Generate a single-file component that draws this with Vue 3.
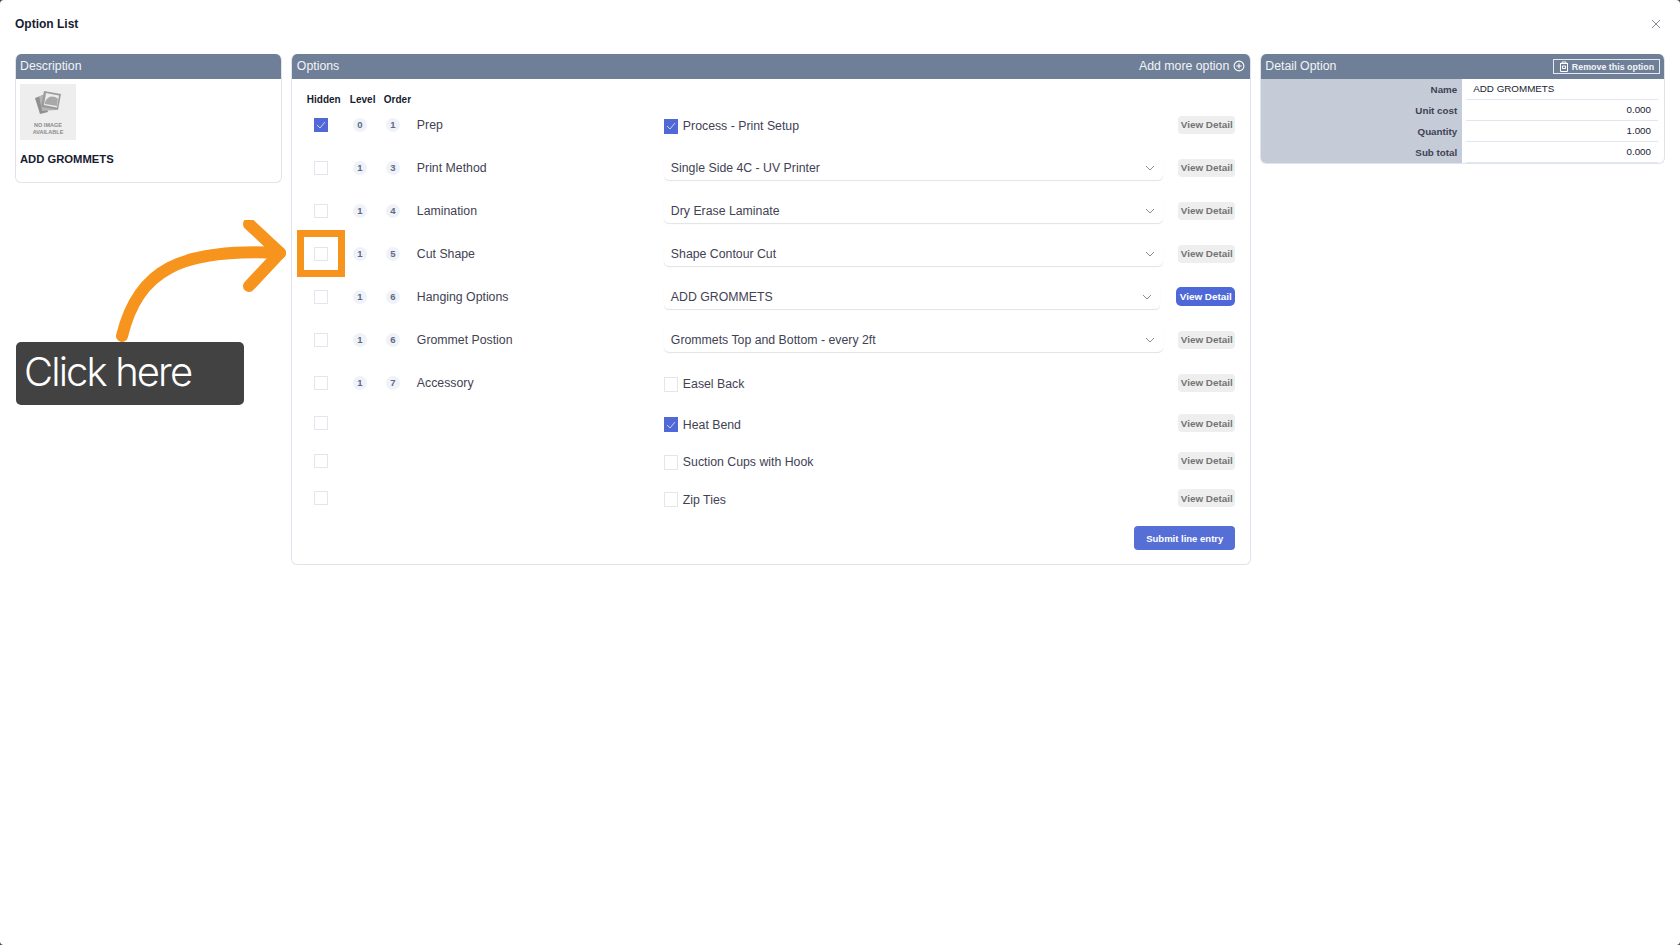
<script setup>
const rows = [
  { hidden: true, level: 0, order: 1, label: 'Prep', type: 'check', value: 'Process - Print Setup', checked: true },
  { level: 1, order: 3, label: 'Print Method', type: 'select', value: 'Single Side 4C - UV Printer' },
  { level: 1, order: 4, label: 'Lamination', type: 'select', value: 'Dry Erase Laminate' },
  { level: 1, order: 5, label: 'Cut Shape', type: 'select', value: 'Shape Contour Cut' },
  { level: 1, order: 6, label: 'Hanging Options', type: 'select', value: 'ADD GROMMETS', active: true },
  { level: 1, order: 6, label: 'Grommet Postion', type: 'select', value: 'Grommets Top and Bottom - every 2ft' },
  { level: 1, order: 7, label: 'Accessory', type: 'check', value: 'Easel Back' },
  { type: 'check', value: 'Heat Bend', checked: true, short: 'a' },
  { type: 'check', value: 'Suction Cups with Hook', short: 'b' },
  { type: 'check', value: 'Zip Ties', short: 'b' }
]
const details = [
  { k: 'Name', v: 'ADD GROMMETS', text: true },
  { k: 'Unit cost', v: '0.000' },
  { k: 'Quantity', v: '1.000' },
  { k: 'Sub total', v: '0.000' }
]
</script>

<template>
  <div class="modal">
    <header class="top">
      <h1>Option List</h1>
      <svg class="close" width="12" height="12" viewBox="0 0 12 12"><path d="M2 2l8 8M10 2l-8 8" stroke="#8a8d99" stroke-width="1" fill="none"/></svg>
    </header>
    <div class="columns">
      <section class="panel desc">
        <div class="head">Description</div>
        <div class="desc-body">
          <div class="noimg">
            <svg width="32" height="28" viewBox="0 0 32 28">
              <path d="M3 10l8-3 5 17-8 2z" fill="#8f8f8f"/>
              <path d="M7 8l16-1 1 15-14 1z" fill="#b5b5b5"/>
              <path d="M12 3l17 3-3 16-17-3z" fill="#9c9c9c"/>
              <path d="M14 5l13 2.500-2 12-13-2.500z" fill="#ececec"/>
              <path d="M13 14c3-6 8-7 13-3l-1 7-12-2z" fill="#a8a8a8"/>
            </svg>
            <span>NO IMAGE<br>AVAILABLE</span>
          </div>
          <p>ADD GROMMETS</p>
        </div>
      </section>

      <section class="panel options">
        <div class="head">
          <span>Options</span>
          <span class="add">Add more option
            <svg width="12" height="12" viewBox="0 0 12 12"><circle cx="6" cy="6" r="4.900" fill="none" stroke="#fff" stroke-width="1.100"/><path d="M6 3.400v5.200M3.400 6h5.200" stroke="#fff" stroke-width="1.100"/></svg>
          </span>
        </div>
        <div class="body">
          <div class="cols">
            <span class="c-hid">Hidden</span><span class="c-lev">Level</span><span class="c-ord">Order</span>
          </div>
          <div v-for="(r, i) in rows" :key="i" class="row" :class="r.short">
            <div class="hid"><i class="box" :class="{ on: r.hidden }"><svg v-if="r.hidden" width="10" height="8" viewBox="0 0 10 8"><path d="M1 4l3 3 5-6" fill="none" stroke="#c9d2f5" stroke-width="1"/></svg></i></div>
            <div class="lev"><b v-if="r.label" class="dot">{{ r.level }}</b></div>
            <div class="ord"><b v-if="r.label" class="dot">{{ r.order }}</b></div>
            <div class="lab">{{ r.label }}</div>
            <div class="val">
              <div v-if="r.type === 'select'" class="sel" :class="{ nar: r.active }">
                <span>{{ r.value }}</span>
                <svg width="10" height="6" viewBox="0 0 10 6"><path d="M1 1l4 4 4-4" fill="none" stroke="#8a8d99" stroke-width="1"/></svg>
              </div>
              <label v-else class="chk">
                <i class="box lg" :class="{ on: r.checked }"><svg v-if="r.checked" width="10" height="8" viewBox="0 0 10 8"><path d="M1 4l3 3 5-6" fill="none" stroke="#c9d2f5" stroke-width="1"/></svg></i>
                {{ r.value }}
              </label>
            </div>
            <button class="vd" :class="{ act: r.active }">View Detail</button>
          </div>
          <div class="foot"><button class="submit">Submit line entry</button></div>
        </div>
      </section>

      <section class="panel detail">
        <div class="head">
          <span>Detail Option</span>
          <span class="rm">
            <svg width="10" height="11" viewBox="0 0 10 11"><path d="M1 2.500h8M3 2.500V1h4v1.500M1.500 2.500v8h7v-8M3.500 5h3v2.500h-3z" fill="none" stroke="#fff" stroke-width="1"/></svg>
            Remove this option
          </span>
        </div>
        <div class="dl">
          <div v-for="d in details" :key="d.k" class="dr">
            <div class="k">{{ d.k }}</div>
            <div class="v" :class="{ t: d.text }"><span>{{ d.v }}</span></div>
          </div>
        </div>
      </section>
    </div>

    <div class="hilite"></div>
    <svg class="arrow" width="190" height="140" viewBox="0 0 190 140">
      <path d="M7 116C23 50 65 28 165 33" fill="none" stroke="#f7941d" stroke-width="12" stroke-linecap="round"/>
      <path d="M134 4L165 33L134 66" fill="none" stroke="#f7941d" stroke-width="12" stroke-linecap="round" stroke-linejoin="round"/>
    </svg>
    <div class="callout">Click here</div>
  </div>
</template>

<style>
html, body { margin: 0; background: #444; }
</style>

<style scoped>
.modal { position: relative; width: 1680px; height: 945px; background: #fff; border-radius: 4px; font-family: "Liberation Sans", Arial, sans-serif; color: #3f4254; overflow: hidden; }
.top { height: 54px; display: flex; align-items: center; justify-content: space-between; padding: 0 18px 7px 15px; box-sizing: border-box; }
h1 { margin: 0; font-size: 12px; font-weight: 700; color: #181c32; }
.columns { display: flex; align-items: flex-start; padding: 0 15px; }
.panel { border: 1px solid #dfe4ec; border-top: 0; border-radius: 6px; box-sizing: border-box; overflow: hidden; background: #fff; }
.head { height: 25px; padding: 0 4px 2px 4px; background: #6f7f97; color: #f2f4f7; font-size: 12.300px; display: flex; align-items: center; justify-content: space-between; box-sizing: border-box; }
.options .head { padding-left: 5px; padding-right: 5px; }
.desc { width: 267px; height: 129px; }
.desc-body { padding: 5px 4px; }
.noimg { width: 56px; height: 56px; background: #eee; display: flex; flex-direction: column; align-items: center; padding-top: 4px; box-sizing: border-box; }
.noimg svg { margin-bottom: 6px; }
.noimg span { font-size: 5.500px; line-height: 7px; text-align: center; color: #8b8b8b; font-weight: 700; }
.desc-body p { margin: 13px 0 0; font-size: 11.250px; font-weight: 700; color: #181c32; }
.options { width: 961px; height: 511px; margin: 0 9px 0 9px; }
.add { display: inline-flex; align-items: center; gap: 4px; }
.body { padding: 0 15px 0 14px; }
.cols { height: 24px; display: flex; align-items: center; padding: 17px 0 0 1px; box-sizing: border-box; font-size: 10px; font-weight: 700; color: #181c32; }
.c-hid { width: 43px; }
.c-lev { width: 34px; }
.c-ord { width: 34px; }
.row { height: 43px; display: flex; align-items: center; font-size: 12.300px; }
.row.a { height: 38px; }
.row.b { height: 37.500px; }
.hid { width: 16px; margin-left: 7px; display: flex; justify-content: center; }
.lev { width: 32px; margin-left: 15px; display: flex; justify-content: center; }
.ord { width: 34px; display: flex; justify-content: center; }
.dot { width: 14px; height: 14px; border-radius: 50%; background: #eff2f8; color: #5e6a82; font-size: 9.500px; font-weight: 700; display: flex; align-items: center; justify-content: center; }
.lab { width: 254px; padding-left: 7px; box-sizing: border-box; }
.val { width: 499px; }
.box { display: flex; align-items: center; justify-content: center; width: 14px; height: 14px; border: 1px solid #e4e6ef; box-sizing: border-box; background: #fff; }
.box.lg { height: 15px; width: 14px; }
.box.on { background: #5069d6; border-color: #5069d6; }
.sel { height: 25px; display: flex; align-items: center; justify-content: space-between; padding: 0 8px 0 7px; box-sizing: border-box; border-radius: 5px; box-shadow: 0 1px 1px rgba(60,70,100,.16); width: 499px; }
.sel.nar { width: 496px; }
.chk { display: flex; align-items: center; gap: 5px; margin-top: 3px; }
.vd { margin-left: auto; width: 57px; height: 18px; border: 0; border-radius: 4px; background: #eeeeee; color: #747474; font: 700 9.900px "Liberation Sans", Arial, sans-serif; padding: 0; }
.vd.act { width: 59px; height: 19px; background: #4f68d8; color: #fff; border-radius: 5px; }
.foot { display: flex; justify-content: flex-end; margin-top: 9px; }
.submit { width: 101px; height: 24px; border: 0; border-radius: 4px; background: #566fd6; color: #fff; font: 700 9.500px "Liberation Sans", Arial, sans-serif; }
.detail { width: 405px; height: 110px; }
.rm { display: inline-flex; align-items: center; justify-content: center; gap: 3px; width: 107px; height: 15px; border: 1px solid #e5e9ef; box-sizing: border-box; font-size: 8.900px; font-weight: 700; color: #f2f4f7; margin-top: 2px; }
.dl { background: #c5ccd8; }
.dr { display: flex; height: 21px; font-size: 9.800px; }
.k { width: 201px; line-height: 21px; text-align: right; padding-right: 5px; box-sizing: border-box; font-weight: 700; color: #3f4254; }
.v { flex: 1; background: #fff; padding: 0 6px 0 4px; }
.v span { display: block; height: 20px; line-height: 20px; border-bottom: 1px solid #e4e6ef; text-align: right; padding: 0 7px; color: #181c32; }
.v.t span { text-align: left; }
.hilite { position: absolute; left: 297px; top: 230px; width: 48px; height: 47px; border: 7px solid #f7941d; box-sizing: border-box; }
.arrow { position: absolute; left: 115px; top: 220px; }
.callout { position: absolute; left: 16px; top: 342px; width: 228px; height: 63px; background: #424242; border-radius: 5px; color: #fff; font: 300 40px Inter, sans-serif; line-height: 59px; padding-left: 8px; box-sizing: border-box; letter-spacing: -1.900px; }
</style>
